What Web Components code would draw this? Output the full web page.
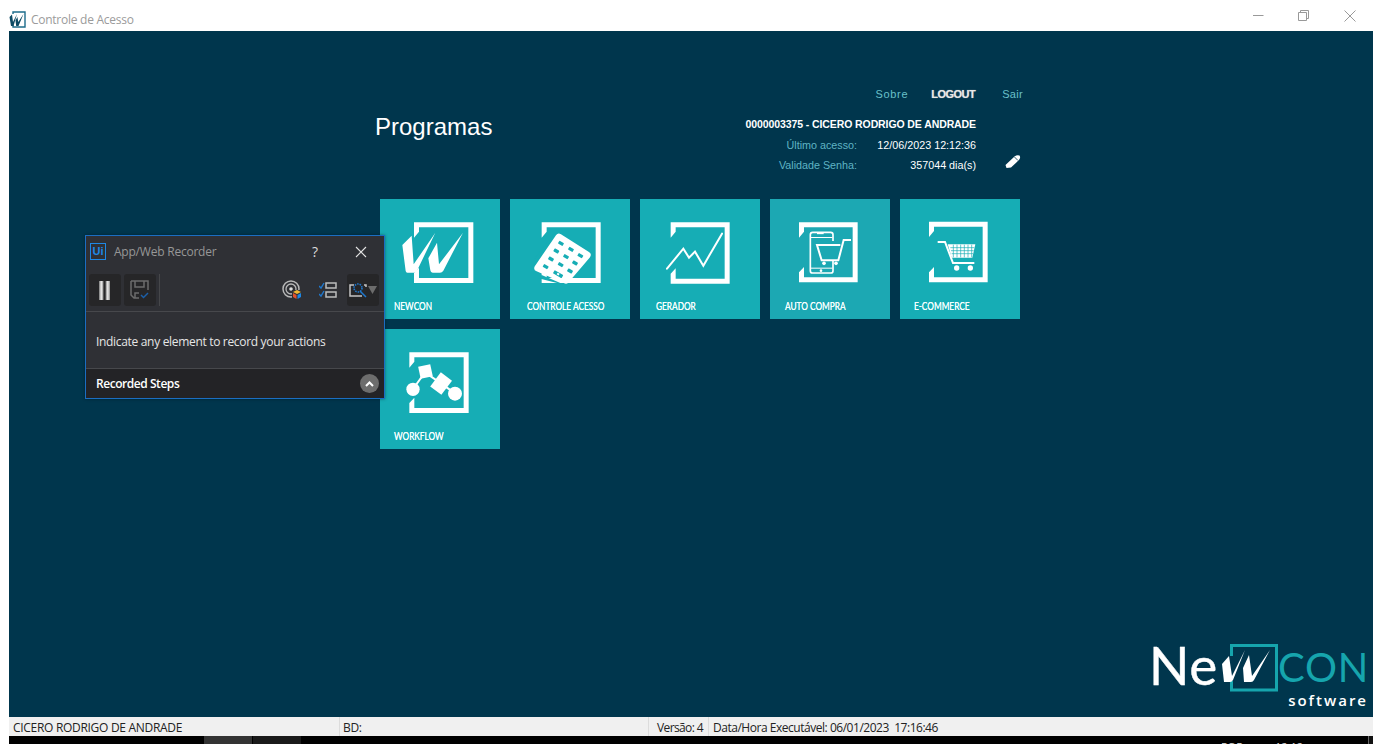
<!DOCTYPE html>
<html lang="pt-BR"><head><meta charset="utf-8"><title>Controle de Acesso</title>
<style>
html,body{margin:0;height:100%;background:#fff;overflow:hidden}
body{font-family:"Liberation Sans",Arial,sans-serif}
</style></head>
<body>
<app-window>
  <title-bar slot="title">Controle de Acesso</title-bar>
  <recorder-panel slot="floating"></recorder-panel>
  <programs-panel slot="main"></programs-panel>
  <brand-logo slot="logo"></brand-logo>
  <status-bar slot="status"></status-bar>
  <task-strip slot="tasks"></task-strip>
</app-window>
<script>
const frame=(a,b,c,d)=>`<path fill="#fff" fill-rule="evenodd" d="M${a} ${b}H${c}V${d}H${a}V${d-30}L${a+15} ${d-46}V${d-15}H${c-15}V${b+15}H${a+15}V${b+28}L${a} ${b+46}Z"/>`;
const ICONS={
newcon:{vb:"15 12 360 360",s:frame(117,82,295,264)+`<g fill="#fff"><path d="M82 150 110 122 116 208 181 113 126 227Q122 233 116 233H97Q93 233 92 228Z"/><path d="M160 190 186 143 192 208 264 113 205 227Q201 233 195 233H173Q167 233 166 226Z"/></g>`},
controle:{vb:"405 12 360 360",s:frame(500,82,677,264)+`<path fill="#16adb5" d="M490 250 570 270 500 240Z"/><path fill="#fff" stroke="#fff" stroke-width="22" stroke-linejoin="round" d="M552 127 636 180 572 255 489 219Z"/><path fill="none" stroke="#16adb5" stroke-width="3" d="M540 112 480 190"/><g fill="#16adb5"><g transform="rotate(30 558 145)"><rect x="550" y="140" width="16" height="10" rx="2"/></g><g transform="rotate(30 588 163)"><rect x="580" y="158" width="16" height="10" rx="2"/></g><g transform="rotate(30 616 182)"><rect x="608" y="177" width="16" height="10" rx="2"/></g><g transform="rotate(30 544 168)"><rect x="536" y="163" width="16" height="10" rx="2"/></g><g transform="rotate(30 573 185)"><rect x="565" y="180" width="16" height="10" rx="2"/></g><g transform="rotate(30 600 204)"><rect x="592" y="199" width="16" height="10" rx="2"/></g><g transform="rotate(30 528 192)"><rect x="520" y="187" width="16" height="10" rx="2"/></g><g transform="rotate(30 557 209)"><rect x="549" y="204" width="16" height="10" rx="2"/></g><g transform="rotate(30 585 228)"><rect x="577" y="223" width="16" height="10" rx="2"/></g><g transform="rotate(30 512 215)"><rect x="504" y="210" width="16" height="10" rx="2"/></g><g transform="rotate(30 549 238)"><rect x="534" y="232" width="30" height="11" rx="2"/></g></g><rect x="546" y="234" width="7" height="6" fill="#fff" transform="rotate(30 549 237)"/>`},
gerador:{vb:"15 12 360 360",s:frame(107,82,284,266)+`<polyline fill="none" stroke="#fff" stroke-width="6" stroke-linecap="round" stroke-linejoin="miter" points="96 221 145 161 162 188 180 170 205 212 261 116"/>`},
auto:{vb:"405 12 360 360",s:frame(492,82,668,262)+`<rect x="526" y="112" width="68" height="122" rx="7" fill="none" stroke="#fff" stroke-width="5"/><rect x="546" y="114" width="20" height="3.5" fill="#fff"/><rect x="528" y="126" width="64" height="3" fill="#fff"/><rect x="528" y="218" width="64" height="3" fill="#fff"/><circle cx="558" cy="227" r="4" fill="#fff"/><path fill="#1ca8b3" d="M536 138H640V196H536Z"/><path fill="none" stroke="#fff" stroke-width="6" d="M648 135H626L610 196H560L546 150H616"/><circle cx="567" cy="205" r="5.5" fill="#fff"/><circle cx="603" cy="205" r="5.5" fill="#fff"/>`},
ecommerce:{vb:"15 12 360 360",s:frame(102,80,278,262)+`<path fill="none" stroke="#fff" stroke-width="6" d="M128 141H150L174 204H238"/><path fill="#fff" d="M158 148H241L232 188H170Z"/><path fill="none" stroke="#16adb5" stroke-width="2" d="M166 158H238M168 167H236M170 176H234M175 149V187M186 149V187M197 149V187M208 149V187M219 149V187M230 149V187"/><circle cx="185" cy="219" r="8" fill="#fff"/><circle cx="226" cy="219" r="8" fill="#fff"/>`},
workflow:{vb:"15 12 360 360",s:frame(103,82,281,264)+`<path fill="none" stroke="#fff" stroke-width="6" d="M114 192 150 142 198 175 240 205"/><rect x="133" y="121" width="37" height="37" fill="#fff" transform="rotate(-12 151 140)"/><rect x="172" y="155" width="53" height="42" fill="#fff" transform="rotate(-53 198 176)"/><circle cx="114" cy="193" r="20" fill="#fff"/><circle cx="240" cy="206" r="21" fill="#fff"/>`}
};
function def(name,html,init){customElements.define(name,class extends HTMLElement{constructor(){super();this.attachShadow({mode:"open"}).innerHTML=typeof html==="function"?html(this):html;}connectedCallback(){if(init)init(this)}})}

def("app-window",`<style>:host{display:flex;flex-direction:column;width:1382px;height:744px;background:#fff;position:relative;overflow:hidden}
.main{flex:1;margin:0 9px;background:#00364d;display:flex;flex-direction:column;position:relative;min-height:0}
.foot{margin:0 9px}</style>
<slot name="title"></slot>
<div class="main"><slot name="main"></slot><slot name="logo"></slot><slot name="floating"></slot></div>
<div class="foot"><slot name="status"></slot><slot name="tasks"></slot></div>`);

def("title-bar",`<style>:host{display:flex;align-items:center;height:31px;flex:none;padding:8px 0 0 9px;box-sizing:border-box;font:12px "Open Sans",sans-serif;color:#9b9b9b;letter-spacing:-.26px}
svg{display:block}.t{margin-left:5px;flex:1;margin-top:-1px}
.b{display:flex;gap:0;margin-right:26px;margin-top:-7px}
.b svg{margin-left:34px}</style>
<svg width="17" height="17" viewBox="0 0 17 17"><path fill="none" stroke="#1d6c8b" stroke-width="1.400" d="M4 3V1H16V16H4V14"/><path fill="#0c4a64" d="M.5 6 3 3.500 4 11 8 3 4.500 15H2Z M6.500 9.500 8.400 6 9.300 11 14.500 3 9.500 15H7.200Z"/></svg>
<span class="t"><slot></slot></span>
<div class="b">
<svg width="11" height="11" viewBox="0 0 11 11"><path d="M0 5.500H10.500" stroke="#999" stroke-width="1"/></svg>
<svg width="11" height="11" viewBox="0 0 11 11"><path fill="none" stroke="#999" d="M.5 2.500H8.500V10.500H.5ZM2.500 2.500V.5H10.500V8.500H8.500"/></svg>
<svg width="12" height="12" viewBox="0 0 12 12" style="margin-left:35px"><path d="M.5 .5 11.500 11.500M11.500 .5 .5 11.500" stroke="#999"/></svg>
</div>`);

def("programs-panel",`<style>:host{display:block;box-sizing:border-box;margin-left:366px;width:650px;padding-top:53px}</style>
<user-head></user-head>
<tile-grid>
<program-tile icon="newcon" lx="14">NEWCON</program-tile>
<program-tile icon="controle" lx="17">CONTROLE ACESSO</program-tile>
<program-tile icon="gerador" lx="16">GERADOR</program-tile>
<program-tile icon="auto" lx="15" tone="#1ca8b3">AUTO COMPRA</program-tile>
<program-tile icon="ecommerce" lx="14">E-COMMERCE</program-tile>
<program-tile icon="workflow" lx="14">WORKFLOW</program-tile>
</tile-grid>`);

def("user-head",`<style>:host{display:block;color:#fff;font:10.75px "Liberation Sans",sans-serif}
nav{display:flex;justify-content:flex-end;align-items:center;height:20px;padding-right:2px;color:#69c0c9;font-size:11px;letter-spacing:.65px}
nav span:last-child{letter-spacing:.3px}
nav b{color:#e8e8e8;margin:0 27px 0 23px;letter-spacing:-.5px;text-shadow:0 0 1px #aaa}
.row{display:flex;justify-content:space-between;margin-top:10px}
h1{font:24px/28px "Liberation Sans",sans-serif;margin:-1px 0 0;color:#fff}
.info{display:grid;grid-template-columns:auto 119px 49px;grid-template-rows:20px 21px 20px;align-items:center;text-align:right;width:330px;justify-content:end}
.name{grid-column:1/3;font-weight:bold;font-size:10.5px;letter-spacing:-.1px;line-height:20px}
.l{color:#5fb4c4}.v{color:#fff}
.gap{grid-column:3}
svg{display:block;margin-left:29px;margin-top:-7px}
</style>
<nav><span>Sobre</span><b>LOGOUT</b><span>Sair</span></nav>
<div class="row"><h1>Programas</h1>
<div class="info">
<div class="name">0000003375 - CICERO RODRIGO DE ANDRADE</div><div class="gap"></div>
<div class="l">Último acesso:</div><div class="v">12/06/2023 12:12:36</div><div class="gap"></div>
<div class="l">Validade Senha:</div><div class="v">357044 dia(s)</div>
<div class="gap"><svg width="16" height="15" viewBox="0 0 16 15"><path fill="#fff" d="M1.500 14 .5 11 9.500 2.500Q12 .5 14.500 1.500 16 3.500 14 6L6 13.500ZM2 12 3.500 13.300 2 13.500Z"/><path d="M9.500 3 13 6.500" stroke="#00364d" stroke-width=".8"/></svg></div>
</div></div>`);

def("tile-grid",`<style>:host{display:grid;grid-template-columns:repeat(5,120px);gap:10px;margin:24px 0 0 5px}</style><slot></slot>`);

def("program-tile",t=>{const i=ICONS[t.getAttribute("icon")];return `<style>:host{display:grid;width:120px;height:120px;background:${t.getAttribute("tone")||"#16adb5"}}
svg,.l{grid-area:1/1}svg{display:block}
.l{align-self:end;padding:0 0 6px ${t.getAttribute("lx")}px;font:10.5px/13px Lato,sans-serif;color:#f2ffff;white-space:nowrap;text-shadow:0 0 .6px #fff}
.l span{display:inline-block;transform:scaleX(.79);transform-origin:0 50%}
</style><svg width="120" height="120" viewBox="${i.vb}">${i.s}</svg><div class="l"><span><slot></slot></span></div>`});

def("brand-logo",`<style>:host{display:block;align-self:flex-end;margin-top:auto;width:224px;height:68px;box-sizing:border-box;margin-right:3px;margin-bottom:6px;font-family:Lato,sans-serif}
.top{display:flex;align-items:center;height:50px;margin-left:1px}
.ne{color:#fff;font-size:53px;line-height:50px;letter-spacing:.6px;width:81px;margin-left:2px;flex:none;margin-top:-6px;-webkit-text-stroke:.4px #fff}
.bx{flex:none;width:48px;height:48px}
.con{color:#16a5ad;font-size:40px;line-height:48px;letter-spacing:.8px;margin-top:-2px;white-space:nowrap}
.sw{color:#fff;font:600 15px/18px "Open Sans",sans-serif;text-align:right;letter-spacing:2px;margin:-2px 2px 0 0}
</style>
<div class="top"><span class="ne">Ne</span>
<svg class="bx" viewBox="0 0 48 48" style="overflow:visible"><path fill="none" stroke="#16a5ad" stroke-width="3" d="M1.500 12V1.500H46.500V46H1.500V37"/><path fill="#fff" d="M-8 20-1 12 2 32 15 6 3 36Q2 38 0 38H-6ZM13 24 19 11 22 32 40 6 24 36Q23 38 21 38H14Z"/></svg>
<span class="con">CON</span></div>
<div class="sw">software</div>`);

def("status-bar",`<style>:host{display:flex;height:19px;background:#f0f0f0;font:12px/21px "Open Sans",sans-serif;color:#222;letter-spacing:-.3px;white-space:pre}
div{box-sizing:border-box;height:100%;padding-left:4px;border-right:1px solid #dcdcdc}
</style><div style="width:331px">CICERO RODRIGO DE ANDRADE</div><div style="width:309px;padding-left:3px">BD:</div><div style="width:60px;padding-left:8px;letter-spacing:-.62px">Versão: 4</div><div style="border:0;padding-left:4px;letter-spacing:-.47px">Data/Hora Executável: 06/01/2023  17:16:46</div>`);

def("task-strip",`<style>:host{display:flex;height:8px;background:#000;overflow:hidden;color:#ddd;font:11px/12px "Open Sans",sans-serif;position:relative}
.a{width:48px;margin-left:195px;background:#333}.c{width:48px;margin-left:1px;background:#1a1a1a}
.p{margin-left:920px;padding-top:5px}.q{margin-left:32px;padding-top:5px}
.e{margin-left:auto;width:4px;border-left:1px solid #666;background:#111}
</style><div class="a"></div><div class="c"></div><span class="p">POR</span><span class="q">12:12</span><div class="e"></div>`);

def("recorder-panel",`<style>:host{position:absolute;left:76px;top:204px;width:300px;height:164px;box-sizing:border-box;border:1px solid #1b6ec2;background:#2f3035;color:#fff;display:flex;flex-direction:column;font:12px "Open Sans",sans-serif;letter-spacing:-.32px;box-shadow:0 0 3px rgba(0,0,0,.4)}
svg{display:block}
.hd{display:flex;align-items:center;height:31px;flex:none;padding-left:4px;color:#979797;letter-spacing:-.22px}
.ui{box-sizing:border-box;width:16px;height:17px;border:1.5px solid #1e88e5;color:#1e88e5;font:bold 11px/14px "Liberation Sans",sans-serif;text-align:center;letter-spacing:0}
.tt{margin-left:8px;flex:1}
.q{color:#ddd;font-size:14px;width:43px;text-align:left}
.x{margin-right:17px}
.tb{display:flex;align-items:center;height:45px;flex:none;padding:7px 5px 5px 3px;box-sizing:border-box;border-bottom:1px solid #47484c;gap:3px}
.btn{width:32px;height:32px;border-radius:3px;background:#262628;display:flex;align-items:center;justify-content:center}
.sep{width:1px;height:32px;background:#46474a;margin-right:auto}
.msg{flex:1;display:flex;align-items:center;padding:2px 0 0 10px;color:#e6e6e6}
.ft{height:30px;flex:none;box-sizing:border-box;border-top:1px solid #47484c;background:#232326;display:flex;align-items:center;justify-content:space-between;padding:0 5px 0 10px;font-weight:600;letter-spacing:-.45px}
.c{width:19px;height:19px;border-radius:50%;background:#6d6d6d;display:flex;align-items:center;justify-content:center}
</style>
<div class="hd"><div class="ui">Ui</div><div class="tt">App/Web Recorder</div><div class="q">?</div>
<svg class="x" width="12" height="12" viewBox="0 0 12 12"><path d="M1 1 11 11M11 1 1 11" stroke="#e4e4e4" stroke-width="1.100"/></svg></div>
<div class="tb">
<div class="btn"><svg width="12" height="19" viewBox="0 0 12 19"><defs><linearGradient id="g"><stop offset="0" stop-color="#777"/><stop offset=".5" stop-color="#eee"/><stop offset="1" stop-color="#888"/></linearGradient></defs><rect x="0" width="4.500" height="19" fill="url(#g)"/><rect x="6.500" width="4.500" height="19" fill="url(#g)"/></svg></div>
<div class="btn"><svg width="20" height="20" viewBox="0 0 20 20"><path fill="none" stroke="#6c6c6c" stroke-width="1.500" d="M1 1H18V10M9 18H4L1 15V1M5 1V7H14V1M5 18V13H9"/><path fill="none" stroke="#1c5fa8" stroke-width="1.500" d="M11 15 13.500 17.500 18 13"/></svg></div>
<div class="sep"></div>
<svg width="20" height="20" viewBox="0 0 20 20" style="margin-right:14px"><circle cx="9" cy="9" r="8" fill="none" stroke="#b8b8b8" stroke-width="1.500"/><circle cx="9" cy="9" r="5" fill="none" stroke="#b8b8b8" stroke-width="1.300"/><circle cx="9" cy="9" r="1.800" fill="#ddd"/><path fill="#2f3035" d="M10 10H20V20H10Z"/><path fill="#f2b632" d="M15 10 19 12 15 14 11 12Z"/><path fill="#e1512d" d="M11 13 14.500 15V19L11 17Z"/><path fill="#1e88e5" d="M19 13 15.500 15V19L19 17Z"/></svg>
<svg width="18" height="16" viewBox="0 0 18 16" style="margin-right:7px"><path fill="none" stroke="#1e78cf" stroke-width="1.400" d="M0 4 2 6 5 1M0 12 2 14 5 9"/><path fill="none" stroke="#bdbdbd" stroke-width="1.500" d="M7 1H17V6H7ZM7 10H17V15H7Z"/></svg>
<div class="btn" style="gap:1px"><svg width="18" height="16" viewBox="0 0 18 16"><path fill="none" stroke="#c4c4c4" stroke-width="1.500" d="M5 3H1V14H13M15 3H17V5"/><path stroke="#1e78cf" stroke-width="1.500" d="M11 9 17 15"/><circle cx="9" cy="6" r="4" fill="none" stroke="#1e78cf" stroke-width="1.600" stroke-dasharray="1.500 1"/></svg><svg width="9" height="8" viewBox="0 0 9 8"><path fill="#6c6c6c" d="M0 0H9L4.500 8Z"/></svg></div>
</div>
<div class="msg">Indicate any element to record your actions</div>
<div class="ft"><span>Recorded Steps</span><span class="c"><svg width="9" height="6" viewBox="0 0 9 6"><path d="M1 5 4.500 1.500 8 5" fill="none" stroke="#fff" stroke-width="2"/></svg></span></div>`);
</script>
</body></html>
